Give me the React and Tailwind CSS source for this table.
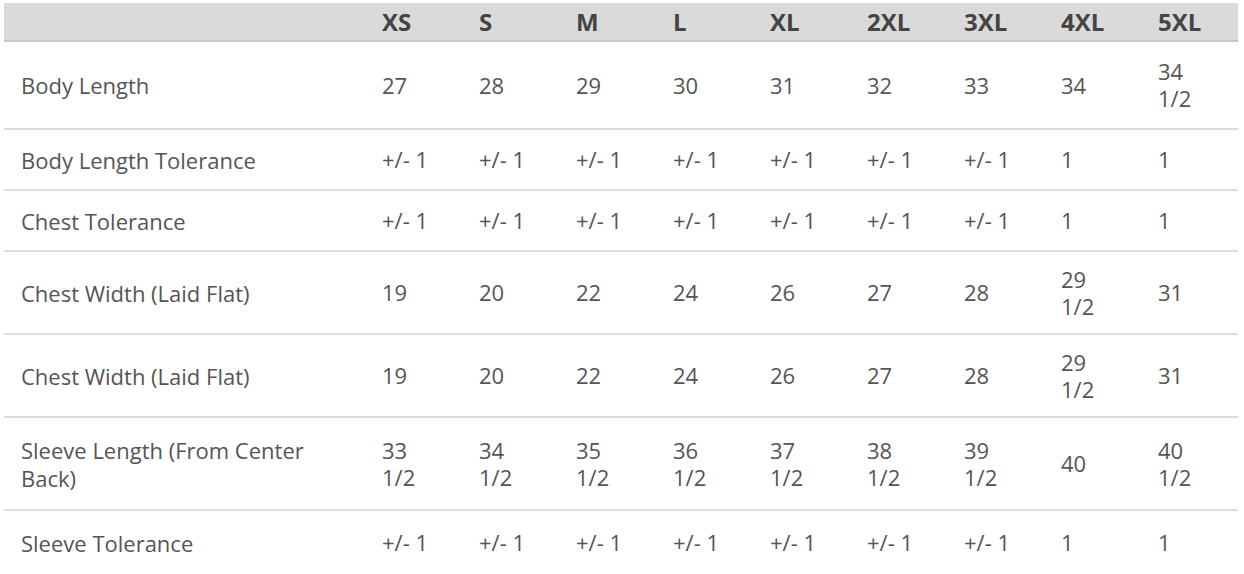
import React from "react";

const sizes = ["XS", "S", "M", "L", "XL", "2XL", "3XL", "4XL", "5XL"];

const rows = [
  { label: "Body Length", h: "h-[88px]", values: ["27", "28", "29", "30", "31", "32", "33", "34", "34 1/2"] },
  { label: "Body Length Tolerance", h: "h-[61px]", values: ["+/- 1", "+/- 1", "+/- 1", "+/- 1", "+/- 1", "+/- 1", "+/- 1", "1", "1"] },
  { label: "Chest Tolerance", h: "h-[61px]", values: ["+/- 1", "+/- 1", "+/- 1", "+/- 1", "+/- 1", "+/- 1", "+/- 1", "1", "1"] },
  { label: "Chest Width (Laid Flat)", h: "h-[83px]", values: ["19", "20", "22", "24", "26", "27", "28", "29 1/2", "31"] },
  { label: "Chest Width (Laid Flat)", h: "h-[83px]", values: ["19", "20", "22", "24", "26", "27", "28", "29 1/2", "31"] },
  { label: "Sleeve Length (From Center Back)", h: "h-[93px]", values: ["33 1/2", "34 1/2", "35 1/2", "36 1/2", "37 1/2", "38 1/2", "39 1/2", "40", "40 1/2"] },
  { label: "Sleeve Tolerance", h: "h-[64px]", values: ["+/- 1", "+/- 1", "+/- 1", "+/- 1", "+/- 1", "+/- 1", "+/- 1", "1", "1"] },
];

const Cell = ({ value }) => {
  const parts = value.split(" ");
  // whole number and fraction go on separate lines like the narrow columns do
  if (parts.length === 2 && parts[1].includes("/") && parts[0] !== "+/-") {
    return (
      <div className="flex flex-col">
        <span>{parts[0]}</span>
        <span>{parts[1]}</span>
      </div>
    );
  }
  return value;
};

const App = () => {
  return (
    <div className="bg-white w-[1244px] h-[574px] overflow-hidden pt-[3px] pl-[4px] font-['Open_Sans',sans-serif]">
      <table className="table-fixed border-collapse w-[1234px] text-[#555]">
        <colgroup>
          <col className="w-[361px]" />
          {sizes.map((s) => (
            <col key={s} className="w-[97px]" />
          ))}
        </colgroup>
        <thead>
          <tr className="bg-[#dadada] h-[38px] border-b-2 border-[#c6c6c6]">
            <th />
            {sizes.map((s) => (
              <th key={s} className="text-left font-bold text-[24px] leading-[30px] text-[#444] pl-[17px] align-middle">
                {s}
              </th>
            ))}
          </tr>
        </thead>
        <tbody>
          {rows.map((row, i) => (
            <tr key={i} className={`${row.h} ${i < rows.length - 1 ? "border-b-2 border-[#dcdcdc]" : ""}`}>
              <td className="pl-[17px] align-middle text-[22px] leading-[28px]">
                <div className="max-w-[300px]">{row.label}</div>
              </td>
              {row.values.map((v, j) => (
                <td key={j} className="pl-[17px] align-middle text-[22px] leading-[27px]">
                  <Cell value={v} />
                </td>
              ))}
            </tr>
          ))}
        </tbody>
      </table>
    </div>
  );
};

export default App;
